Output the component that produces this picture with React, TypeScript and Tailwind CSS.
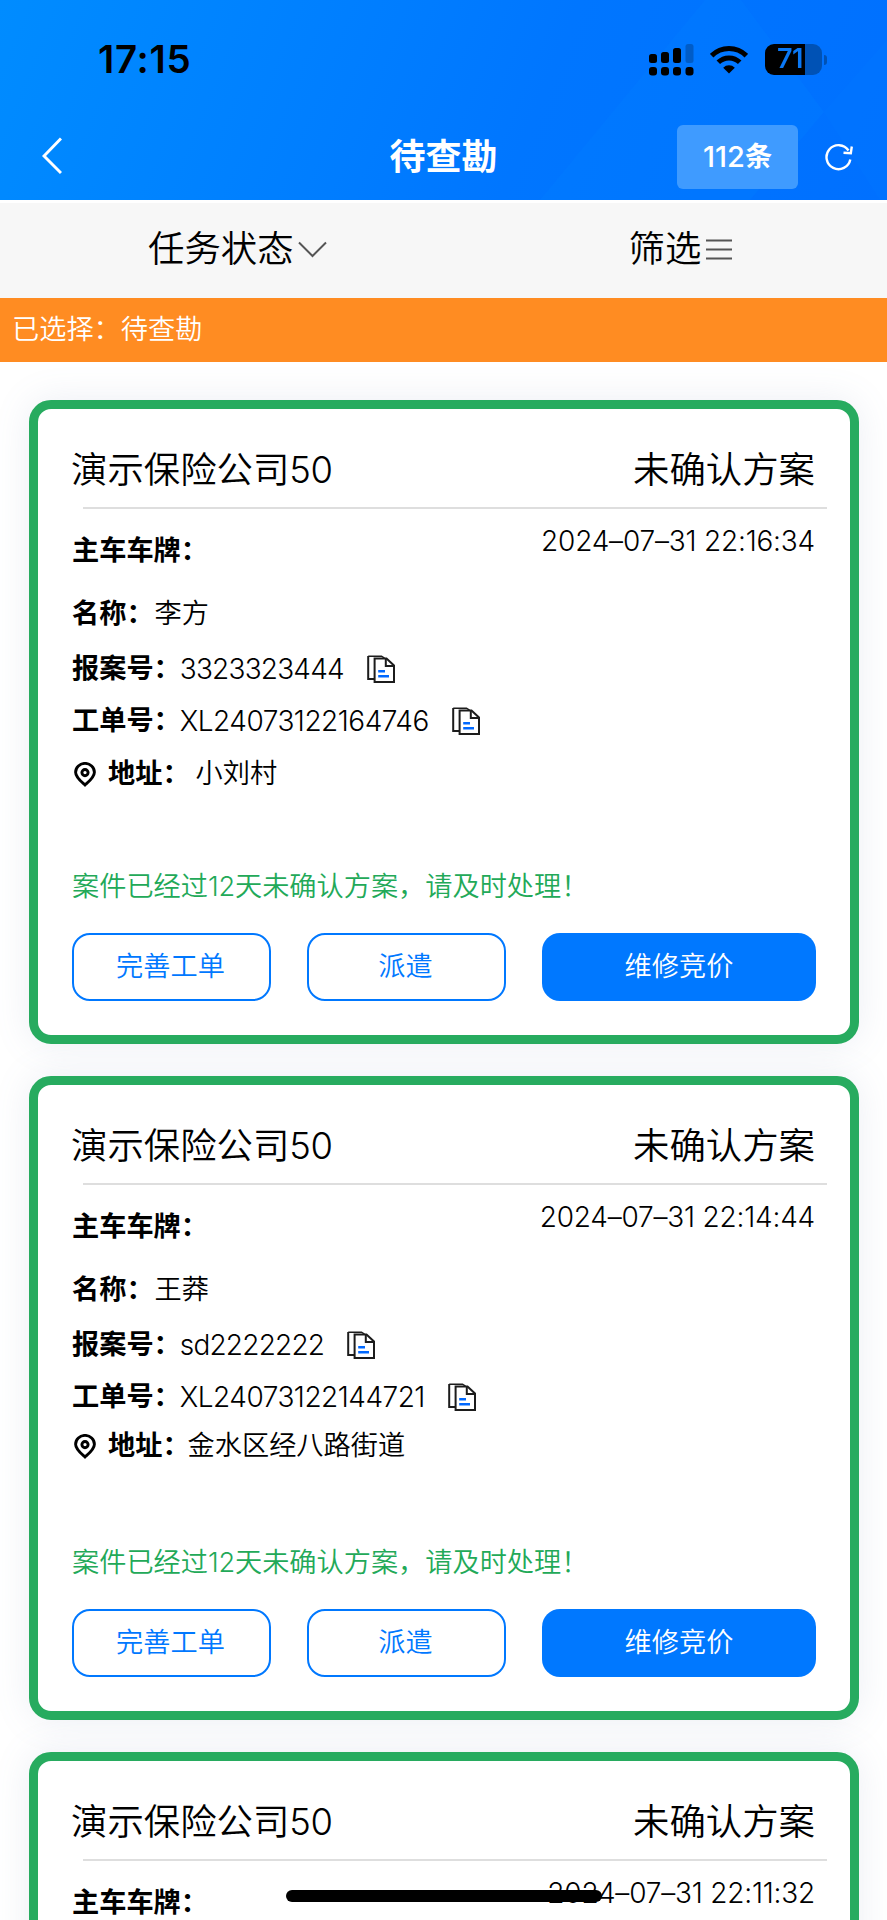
import type { ReactNode } from 'react';

interface Order {
  company: string;
  status: string;
  time: string;
  name?: string;
  reportNo?: string;
  orderNo?: string;
  address?: string;
  compact?: boolean;
}

const orders: Order[] = [
  {
    company: '演示保险公司',
    status: '未确认方案',
    time: '2024–07–31 22:16:34',
    name: '李方',
    reportNo: '3323323444',
    orderNo: 'XL24073122164746',
    address: '小刘村',
  },
  {
    company: '演示保险公司',
    status: '未确认方案',
    time: '2024–07–31 22:14:44',
    name: '王莽',
    reportNo: 'sd2222222',
    orderNo: 'XL24073122144721',
    address: '金水区经八路街道',
    compact: true,
  },
  {
    company: '演示保险公司',
    status: '未确认方案',
    time: '2024–07–31 22:11:32',
  },
];

function SignalIcon() {
  return (
    <svg width="45" height="32" viewBox="0 0 45 32" className="ml-auto">
      <rect x="0" y="10" width="8" height="9" rx="2.5" />
      <rect x="12" y="8" width="8" height="11" rx="2.5" />
      <rect x="24" y="4" width="8" height="15" rx="2.5" />
      <rect x="36.5" y="0" width="8" height="19" rx="2.5" opacity="0.22" />
      <rect x="0" y="23" width="8" height="8.5" rx="3" />
      <rect x="12" y="23" width="8" height="8.5" rx="3" />
      <rect x="24" y="23" width="8" height="8.5" rx="3" />
      <rect x="36.5" y="23" width="8" height="8.5" rx="3" />
    </svg>
  );
}

function WifiIcon() {
  return (
    <svg width="38" height="28" viewBox="0 0 38 28" className="ml-4" fill="none" stroke="#000" strokeWidth="5">
      <path d="M1.7 9.7a24.500 24.500 0 0 1 34.600 0" />
      <path d="M8.3 16.3a15.200 15.200 0 0 1 21.400 0" />
      <path d="M19 27.5l-5.8-5.8a8.300 8.300 0 0 1 11.600 0z" fill="#000" stroke="none" />
    </svg>
  );
}

function Battery() {
  return (
    <div className="ml-[17px] flex items-center">
      <div className="flex h-[31px] w-[57px] items-center rounded-[9px] bg-[linear-gradient(90deg,#000_0_40px,#0052b5_40px)] pl-3 font-[Inter] text-[27px] font-semibold tracking-[-0.5px]">
        <span className="w-[34px] bg-[linear-gradient(90deg,#0a78f5_0_28px,#0052b5_28px)] bg-clip-text text-transparent">71</span>
      </div>
      <div className="ml-0.5 h-2.5 w-[3px] rounded-r-full bg-[#0052b5]" />
    </div>
  );
}

function CopyIcon() {
  return (
    <svg width="28" height="28" viewBox="0 0 28 28" fill="none" stroke="#1c1c1c" strokeWidth="2">
      <path d="M7.5 24H1.2V1" />
      <path d="M1.2 1.2H14.5l3 2" strokeWidth="1.4" />
      <path d="M7.6 3.6H19.5L27 10.5V27H7.6z" fill="#fff" />
      <path d="M18.8 4v7H27" />
      <path d="M11.2 16.2h6.8M11.2 21.3h10.800" stroke="#0068ff" strokeWidth="2.4" />
    </svg>
  );
}

function PinIcon() {
  return (
    <svg width="22" height="25" viewBox="0 0 22 25" fill="none" stroke="#000" strokeWidth="2.9">
      <path d="M11 23C7 19.5 1.6 15.4 1.6 10.3a9.400 8.900 0 0 1 18.800 0C20.400 15.400 15 19.500 11 23z" />
      <circle cx="11" cy="10.6" r="3.1" />
    </svg>
  );
}

function Label({ children }: { children: ReactNode }) {
  return <span className="font-semibold">{children}</span>;
}

function OrderDetails({ order }: { order: Order }) {
  return (
    <>
      <div className="mt-9 flex h-9 items-center">
        <Label>名称：</Label>
        <span className="ml-px">{order.name}</span>
      </div>
      <div className="mt-[19px] flex h-9 items-center">
        <Label>报案号：</Label>
        <span className="-ml-px mr-[23px] text-[28px] font-light tracking-[-0.8px]">{order.reportNo}</span>
        <CopyIcon />
      </div>
      <div className="mt-4 flex h-9 items-center">
        <Label>工单号：</Label>
        <span className="-ml-px mr-[23px] text-[28px] font-light tracking-[-0.5px]">{order.orderNo}</span>
        <CopyIcon />
      </div>
      <div className={order.compact ? 'mt-[13px] mb-[81px] flex h-9 items-center' : 'mt-[17px] mb-[77px] flex h-9 items-center'}>
        <div className="mr-3 ml-0.5">
          <PinIcon />
        </div>
        <Label>地址：</Label>
        <span className={order.compact ? '-ml-0.5' : 'ml-1.5'}>{order.address}</span>
      </div>

      <div className="text-[#22a958]">
        案件已经过<span className="tracking-[-0.2px]">12</span>天未确认方案，请及时处理！
      </div>
      <div className="mt-7 flex h-[68px]">
        <button className="mr-9 w-[199px] rounded-[18px] border-2 border-[#0078ff] pr-0.5 text-[#0078ff]">完善工单</button>
        <button className="mr-9 w-[199px] rounded-[18px] border-2 border-[#0078ff] pr-0.5 text-[#0078ff]">派遣</button>
        <button className="flex-1 rounded-[18px] bg-[#0078ff] text-white">维修竞价</button>
      </div>
    </>
  );
}

function OrderCard({ order }: { order: Order }) {
  return (
    <div className="h-[644px] shrink-0 rounded-[22px] border-9 border-[#27ab5f] bg-white px-[34px] pt-[33px] text-[27.2px] leading-9 whitespace-nowrap shadow-[0_0_36px_rgba(110,120,170,0.13)]">
      <div className="flex h-[54px] items-center justify-between pt-0.5 text-[36.4px]">
        <span className="-ml-px">
          {order.company}
          <span className="tracking-[-0.5px]">50</span>
        </span>
        <span className="mr-px">{order.status}</span>
      </div>
      <div className="mt-[11px] -mr-[11px] ml-[11px] h-0.5 bg-[#dedede]" />

      <div className="flex h-[51px] items-start justify-between">
        <div className="pt-6">
          <Label>主车车牌：</Label>
        </div>
        <span className="mr-px pt-3.5 text-[28px] tracking-[-0.2px]">{order.time}</span>
      </div>

      {order.name && <OrderDetails order={order} />}
    </div>
  );
}

export default function App() {
  return (
    <div className="relative flex h-[1920px] w-[887px] flex-col overflow-hidden bg-white font-[350] text-black [font-family:Inter,'Noto_Sans_CJK_SC',sans-serif]">
      <header className="relative h-[200px] shrink-0 bg-[linear-gradient(112deg,#008cff_0%,#007dff_42%,#0076ff_60%,#0070ff_100%)]">
        {/* faint facets on the right of the header */}
        <svg width="887" height="200" viewBox="0 0 887 200" className="absolute inset-0">
          <path d="M540 200L705 0h36l83 112-74 88z" fill="#0082ff" opacity="0.22" />
          <path d="M824 112l63-72v160h-7z" fill="#0082ff" opacity="0.14" />
        </svg>
        <div className="relative flex h-[118px] items-center pt-px pr-[60px] pl-[98px]">
          <span className="text-[38.5px] font-semibold tracking-[0.7px]">17:15</span>
          <SignalIcon />
          <WifiIcon />
          <Battery />
        </div>
        <div className="relative grid h-[78px] grid-cols-[1fr_auto_1fr] items-center text-white">
          <svg width="20" height="38" viewBox="0 0 20 38" fill="none" stroke="currentColor" strokeWidth="3" className="mb-0.5 ml-[42px]">
            <path d="M19 1.5L2 19l17 17" />
          </svg>
          <h1 className="text-[36px] font-semibold">待查勘</h1>
          <div className="flex items-center justify-end pr-[34px]">
            <div className="flex h-16 w-[121px] items-center justify-center rounded-md bg-[#3f9bff] text-[27.2px] font-semibold">
              <span className="text-[29px] font-medium">112</span>条
            </div>
            <svg width="28" height="28" viewBox="0 0 28 28" fill="none" stroke="currentColor" strokeWidth="2.4" className="ml-[27px]">
              <path d="M25.3 16.5A12 12 0 1 1 23.5 7.5" />
              <path d="M18.5 9.8l7.3.5 1-6.800" />
            </svg>
          </div>
        </div>
      </header>

      <nav className="mt-[3px] grid h-[95px] shrink-0 grid-cols-2 items-center bg-[#f7f7f7] text-[36.4px]">
        <div className="flex items-center pb-0.5 pl-[148px]">
          任务状态
          <svg width="29" height="17" viewBox="0 0 29 17" fill="none" stroke="#555" strokeWidth="2" className="ml-1">
            <path d="M1 1.5L14.5 15 28 1.5" />
          </svg>
        </div>
        <div className="flex items-center pb-0.5 pl-[185px]">
          筛选
          <svg width="26" height="21" viewBox="0 0 26 21" stroke="#555" strokeWidth="2" className="ml-[5px]">
            <path d="M0 1.5h26M0 10.5h26M0 19.5h26" />
          </svg>
        </div>
      </nav>

      <div className="flex h-[63.5px] shrink-0 items-center bg-[#ff8c22] pt-0.5 pl-3 text-[27.2px] text-white">已选择：待查勘</div>

      <main className="flex flex-col gap-8 pt-[38.5px] pr-7 pl-[29px]">
        {orders.map((order) => (
          <OrderCard key={order.time} order={order} />
        ))}
      </main>

      {/* home indicator */}
      <div className="absolute top-[1890px] left-[286px] h-3 w-[316px] rounded-full bg-black" />
    </div>
  );
}
